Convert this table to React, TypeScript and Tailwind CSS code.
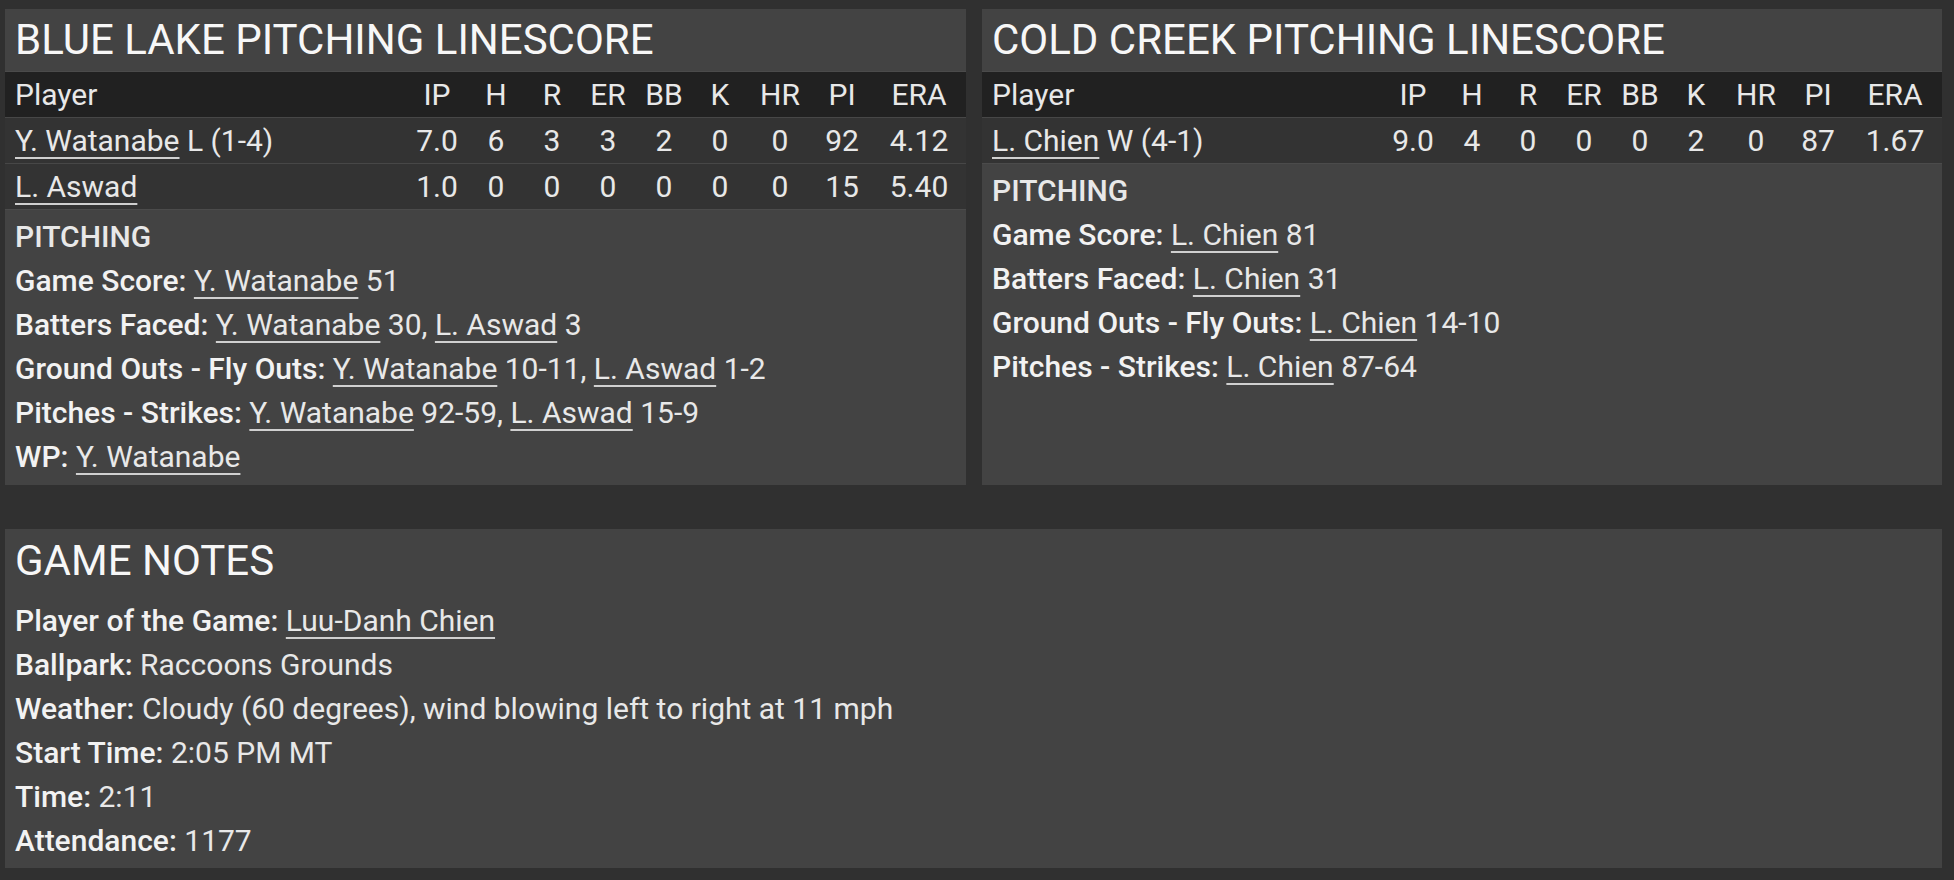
import type { ReactNode } from 'react';

type Line = { player: string; note?: string; stats: string[] };

const COLS = ['IP', 'H', 'R', 'ER', 'BB', 'K', 'HR', 'PI', 'ERA'];
const grid = 'grid grid-cols-[1fr_62px_56px_56px_56px_56px_56px_64px_60px_94px] items-center';

const blueLake: Line[] = [
  { player: 'Y. Watanabe', note: 'L (1-4)', stats: ['7.0', '6', '3', '3', '2', '0', '0', '92', '4.12'] },
  { player: 'L. Aswad', stats: ['1.0', '0', '0', '0', '0', '0', '0', '15', '5.40'] },
];

const coldCreek: Line[] = [
  { player: 'L. Chien', note: 'W (4-1)', stats: ['9.0', '4', '0', '0', '0', '2', '0', '87', '1.67'] },
];

function Link({ children }: { children: ReactNode }) {
  return (
    <span className="underline decoration-2 underline-offset-[6px] decoration-[#d0d0d0]">{children}</span>
  );
}

function Row({ label, children }: { label: string; children?: ReactNode }) {
  return (
    <div className="h-[44px] leading-[44px] whitespace-nowrap">
      <span className="font-medium text-[#f2f2f2]">{label}</span> {children}
    </div>
  );
}

function Linescore({ title, lines, children }: { title: string; lines: Line[]; children: ReactNode }) {
  return (
    <div className="flex flex-col bg-[#434343]">
      <div className="h-[62px] leading-[62px] px-[10px] text-[42px] text-[#f7f7f7]">{title}</div>
      <div className={`${grid} h-[46px] border-t border-[#4b4b4b] bg-[#212121] pl-[10px]`}>
        <div>Player</div>
        {COLS.map((c) => (
          <div key={c} className="text-center">{c}</div>
        ))}
      </div>
      {lines.map((l) => (
        <div key={l.player} className={`${grid} h-[46px] border-t border-[#474747] bg-[#333333] pl-[10px]`}>
          <div className="whitespace-nowrap">
            <Link>{l.player}</Link>
            {l.note ? ` ${l.note}` : ''}
          </div>
          {l.stats.map((s, i) => (
            <div key={i} className="text-center">{s}</div>
          ))}
        </div>
      ))}
      <div className="flex-1 border-t border-[#4b4b4b] px-[10px] pt-[5px] pb-[6px]">
        <div className="h-[44px] leading-[44px] font-medium">PITCHING</div>
        {children}
      </div>
    </div>
  );
}

export default function App() {
  return (
    <div className="min-h-screen bg-[#303030] pl-[5px] pr-[12px] pt-[9px] pb-[11px] font-['Roboto',sans-serif] text-[30px] text-[#e8e8e8]">
      <div className="grid grid-cols-[961px_960px] gap-[16px]">
        <Linescore title="BLUE LAKE PITCHING LINESCORE" lines={blueLake}>
          <Row label="Game Score:">
            <Link>Y. Watanabe</Link> 51
          </Row>
          <Row label="Batters Faced:">
            <Link>Y. Watanabe</Link> 30, <Link>L. Aswad</Link> 3
          </Row>
          <Row label="Ground Outs - Fly Outs:">
            <Link>Y. Watanabe</Link> 10-11, <Link>L. Aswad</Link> 1-2
          </Row>
          <Row label="Pitches - Strikes:">
            <Link>Y. Watanabe</Link> 92-59, <Link>L. Aswad</Link> 15-9
          </Row>
          <Row label="WP:">
            <Link>Y. Watanabe</Link>
          </Row>
        </Linescore>
        <Linescore title="COLD CREEK PITCHING LINESCORE" lines={coldCreek}>
          <Row label="Game Score:">
            <Link>L. Chien</Link> 81
          </Row>
          <Row label="Batters Faced:">
            <Link>L. Chien</Link> 31
          </Row>
          <Row label="Ground Outs - Fly Outs:">
            <Link>L. Chien</Link> 14-10
          </Row>
          <Row label="Pitches - Strikes:">
            <Link>L. Chien</Link> 87-64
          </Row>
        </Linescore>
      </div>

      <div className="mt-[44px] bg-[#434343] px-[10px] pb-[5px]">
        <div className="h-[63px] leading-[63px] text-[42px] text-[#f7f7f7]">GAME NOTES</div>
        <div className="pt-[7px]">
          <Row label="Player of the Game:">
            <Link>Luu-Danh Chien</Link>
          </Row>
          <Row label="Ballpark:">Raccoons Grounds</Row>
          <Row label="Weather:">Cloudy (60 degrees), wind blowing left to right at 11 mph</Row>
          <Row label="Start Time:">2:05 PM MT</Row>
          <Row label="Time:">2:11</Row>
          <Row label="Attendance:">1177</Row>
        </div>
      </div>
    </div>
  );
}
